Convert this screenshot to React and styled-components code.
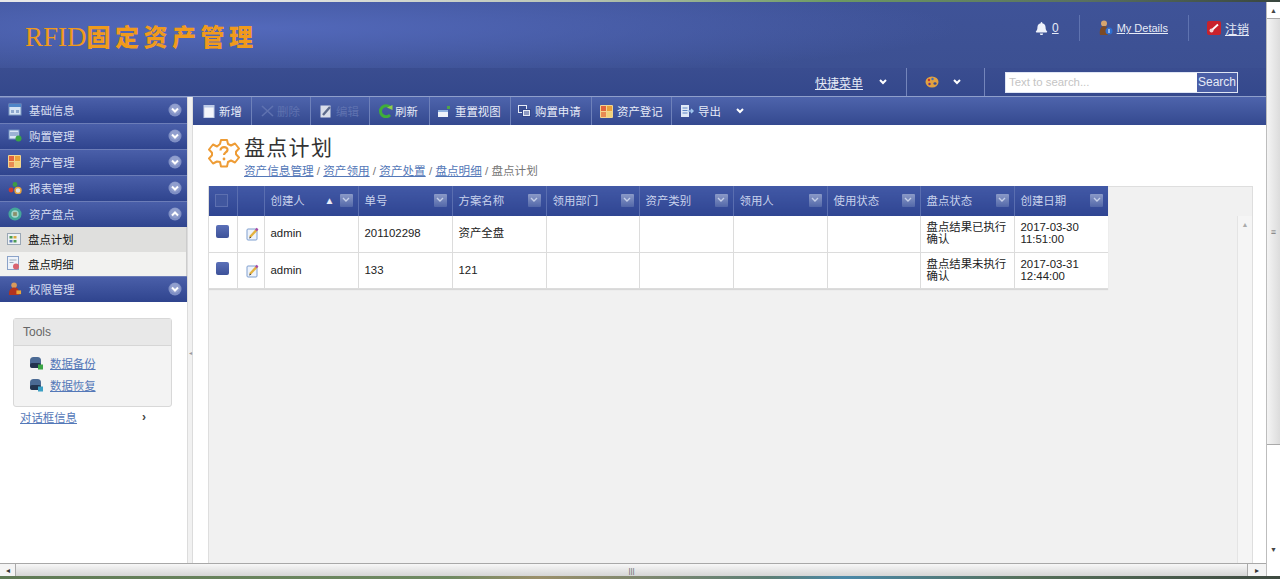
import React from 'react';
import styled, { createGlobalStyle } from 'styled-components';
import { FaBell } from 'react-icons/fa';

const GlobalStyle = createGlobalStyle`
  html, body {
    margin: 0;
    padding: 0;
    height: 579px;
    overflow: hidden;
    background: #fff;
    font-family: "Liberation Sans", "Noto Sans CJK SC", sans-serif;
    font-size: 11.4px;
  }
  * { box-sizing: border-box; }
`;

const Shell = styled.div`
  width: 1280px;
  height: 579px;
  display: flex;
  flex-direction: column;
`;
const TopStrip = styled.div`
  height: 2px;
  flex: none;
  background: linear-gradient(90deg, #e8e8e8 0, #e8e8e8 18%, #b9c4b4 45%, #6d9a62 65%, #59705f 85%, #39463f 100%);
`;
const Window = styled.div`
  flex: 1;
  min-height: 0;
  display: flex;
`;
const Page = styled.div`
  flex: 1;
  min-width: 0;
  display: flex;
  flex-direction: column;
`;

/* header */
const Header = styled.header`
  height: 66px;
  flex: none;
  display: flex;
  align-items: flex-start;
  justify-content: space-between;
  padding: 19px 17px 0 25px;
  background:
    radial-gradient(ellipse 720px 52px at 240px 26px, #5369bb 0, rgba(83, 105, 187, 0) 100%),
    linear-gradient(#3f5398, #3c5092);
`;
const Logo = styled.div`
  font-family: "Liberation Serif", "Noto Sans CJK SC", serif;
  font-size: 27px;
  line-height: 30px;
  font-weight: 400;
  color: #f09a1c;
  white-space: nowrap;
  & > b {
    font-family: "Noto Sans CJK SC", sans-serif;
    font-weight: 900;
    font-size: 24px;
    letter-spacing: 4.5px;
  }
`;
const HeaderTools = styled.div`
  display: flex;
  align-items: center;
  height: 26px;
  margin-top: -6px;
`;
const HeadTool = styled.div`
  display: flex;
  align-items: center;
  gap: 4px;
  height: 26px;
  padding-left: ${(p) => p.$pl || 0}px;
  padding-right: ${(p) => p.$pr || 0}px;
  border-left: ${(p) => (p.$sep ? '1px solid #5f73b0' : 'none')};
  svg { flex: none; }
`;
const WhiteLink = styled.a`
  color: #e6ebf7;
  font-size: ${(p) => p.$size || 12}px;
  text-decoration: underline;
`;

const SubBar = styled.div`
  height: 29px;
  flex: none;
  display: flex;
  align-items: center;
  justify-content: flex-end;
  padding-right: 28px;
  background: linear-gradient(#3a4d90, #34488c);
  border-bottom: 1px solid #8f9fcb;
`;
const SubItem = styled.div`
  height: 28px;
  display: flex;
  align-items: center;
  padding-left: ${(p) => p.$pl || 0}px;
  padding-right: ${(p) => p.$pr || 0}px;
  gap: ${(p) => p.$gap || 0}px;
  border-left: ${(p) => (p.$sep ? '1px solid #7485bb' : 'none')};
`;
const SearchBox = styled.div`
  width: 233px;
  height: 21px;
  display: flex;
  background: #fff;
  border: 1px solid #dfe5f4;
`;
const SearchInput = styled.div`
  flex: 1;
  padding-left: 3px;
  line-height: 19px;
  color: #c4c4c4;
`;
const SearchButton = styled.div`
  width: 40px;
  background: #4a5ea6;
  color: #e6ebf7;
  text-align: center;
  line-height: 19px;
  font-size: 12px;
`;

/* body */
const Body = styled.div`
  flex: 1;
  min-height: 0;
  display: flex;
`;
const Sidebar = styled.aside`
  width: 187px;
  flex: none;
  background: #fff;
`;
const NavHead = styled.div`
  height: 26px;
  display: flex;
  align-items: center;
  padding: 0 5px 2px 8px;
  background: linear-gradient(#4a5fa9, #2f448e);
  border-top: 1px solid #6c7db8;
  color: #d5dcf0;
  & > span { flex: 1; margin-left: 7px; }
  & > svg { flex: none; }
`;
const NavSub = styled.div`
  height: 24.5px;
  display: flex;
  align-items: center;
  gap: 7px;
  padding-left: 7px;
  color: #111;
  background: ${(p) => (p.$active ? '#dfdfdd' : '#f2f2f0')};
  border-right: 1px solid #ccc;
`;
const ToolsBox = styled.div`
  margin: 16px 15px 0 13px;
  height: 89px;
  background: #f3f3f3;
  border: 1px solid #d8d8d8;
  border-radius: 3px;
`;
const ToolsTitle = styled.div`
  height: 27px;
  line-height: 26px;
  padding-left: 9px;
  color: #666;
  font-size: 12px;
  background: #e8e8e8;
  border-bottom: 1px solid #d6d6d6;
`;
const ToolsList = styled.div`
  padding: 6px 0 0 15px;
`;
const ToolsLink = styled.div`
  height: 22px;
  display: flex;
  align-items: center;
  gap: 6px;
`;
const BlueLink = styled.a`
  color: #5478b8;
  text-decoration: underline;
`;
const DialogRow = styled.div`
  display: flex;
  justify-content: space-between;
  align-items: center;
  padding: 2px 41px 0 20px;
  color: #444;
  & > b { font-size: 12px; }
`;
const Splitter = styled.div`
  width: 6px;
  flex: none;
  display: flex;
  align-items: center;
  justify-content: center;
  padding-top: 44px;
  background: #f1f1f1;
  border-left: 1px solid #dcdcdc;
  border-right: 1px solid #dcdcdc;
  color: #999;
  font-size: 6px;
`;

/* main */
const Main = styled.main`
  flex: 1;
  min-width: 0;
  display: flex;
  flex-direction: column;
`;
const Toolbar = styled.div`
  height: 28px;
  flex: none;
  display: flex;
  background: linear-gradient(#4e64ac, #34498f);
`;
const ToolButton = styled.div`
  width: ${(p) => p.$w}px;
  flex: none;
  display: flex;
  align-items: center;
  gap: ${(p) => p.$gap ?? 4}px;
  padding-left: ${(p) => p.$pl ?? 9}px;
  color: ${(p) => (p.$disabled ? '#5f72b0' : '#e8ecf8')};
  border-right: ${(p) => (p.$last ? 'none' : '1px solid #6e81ba')};
  & > span { white-space: nowrap; }
`;
const ToolCaret = styled.div`
  margin-left: 11px;
  display: flex;
`;
const Content = styled.div`
  flex: 1;
  min-height: 0;
  display: flex;
  flex-direction: column;
  padding: 10px 13px 0 15px;
  background: #fff;
`;
const TitleRow = styled.div`
  height: 51px;
  flex: none;
  display: flex;
  gap: 4px;
`;
const TitleIcon = styled.div`
  padding-top: 3px;
`;
const PageTitle = styled.h1`
  margin: 0;
  font-size: 21px;
  line-height: 25px;
  font-weight: 400;
  letter-spacing: 1.3px;
  color: #333;
`;
const Crumbs = styled.div`
  font-size: 11.6px;
  line-height: 14px;
  margin-top: 4px;
  color: #777;
`;
const Panel = styled.div`
  flex: 1;
  min-height: 0;
  display: flex;
  background: #f1f1f1;
  border: 1px solid #dedede;
  border-top: none;
  border-bottom: none;
  box-shadow: inset 0 1px 0 #dedede;
`;
const TableArea = styled.div`
  flex: 1;
  min-width: 0;
`;
const InnerScroll = styled.div`
  width: 15px;
  flex: none;
  margin-top: 30px;
  padding-top: 5px;
  display: flex;
  justify-content: center;
  background: #f5f5f5;
  border-left: 1px solid #e4e4e4;
  color: #aaa;
  font-size: 7px;
`;
const Grid = styled.table`
  width: 899px;
  table-layout: fixed;
  border-collapse: collapse;
  background: #fff;
  font-size: 11.4px;
  box-shadow: 0 1px 1px #d8d8d8;
`;
const HeadCell = styled.th`
  height: 30px;
  padding: 0 5px 2px 6px;
  font-weight: 400;
  text-align: left;
  color: #c9d2ec;
  background: linear-gradient(#4259a6, #2f4592);
  border-right: 1px solid #5a6eb0;
  &:last-child { border-right: none; }
`;
const HeadInner = styled.div`
  display: flex;
  align-items: center;
  justify-content: space-between;
`;
const SortGroup = styled.div`
  display: flex;
  align-items: center;
  gap: 5px;
  color: #e8ecf8;
  font-size: 10px;
`;
const FilterIcon = styled.div`
  width: 13px;
  height: 13px;
  flex: none;
  background: linear-gradient(#8b9ac8, #5267a8);
  border-radius: 1px;
  display: flex;
  align-items: center;
  justify-content: center;
`;
const HeadBox = styled.div`
  width: 13px;
  height: 13px;
  border: 1px solid #5d70b0;
  background: #41579f;
`;
const Cell = styled.td`
  height: ${(p) => p.$h}px;
  padding: 0 5px 1px 6px;
  color: #222;
  line-height: 12px;
  border-right: 1px solid #dcdcdc;
  border-bottom: 1px solid #dcdcdc;
  &:last-child { border-right: none; }
`;
const RowCheck = styled.div`
  width: 13px;
  height: 13px;
  margin: -3px 0 0 1px;
  background: linear-gradient(#5b70b8, #3d5299);
  border-radius: 2px;
`;
const EditWrap = styled.div`
  padding-top: 4px;
  margin-left: 2px;
`;

/* scrollbars */
const HScroll = styled.div`
  height: 13px;
  flex: none;
  display: flex;
  border-top: 1px solid #a8a8a8;
  background: #fff;
`;
const HArrow = styled.div`
  width: ${(p) => p.$w}px;
  flex: none;
  display: flex;
  align-items: center;
  justify-content: center;
  color: #333;
  font-size: 8px;
  background: #f4f4f4;
`;
const HThumb = styled.div`
  flex: 1;
  display: flex;
  align-items: center;
  justify-content: center;
  color: #666;
  font-size: 8px;
  background: linear-gradient(#f7f7f7, #d5d5d5);
  border-left: 1px solid #aaa;
  border-right: 1px solid #aaa;
`;
const VScroll = styled.div`
  width: 14px;
  flex: none;
  display: flex;
  flex-direction: column;
  background: #fff;
  border-left: 1px solid #bdbdbd;
`;
const VArrow = styled.div`
  height: ${(p) => p.$h}px;
  flex: none;
  display: flex;
  align-items: ${(p) => p.$align || 'center'};
  justify-content: center;
  color: #444;
  font-size: 7px;
`;
const VThumb = styled.div`
  height: 427px;
  flex: none;
  display: flex;
  align-items: center;
  justify-content: center;
  color: #777;
  font-size: 9px;
  background: linear-gradient(90deg, #f4f4f4, #dcdcdc);
  border-top: 1px solid #aaa;
  border-bottom: 1px solid #aaa;
`;
const VGap = styled.div`
  flex: 1;
`;
const BottomStrip = styled.div`
  height: 3px;
  flex: none;
  background: linear-gradient(90deg, #5f7a55 0, #6f8a62 35%, #9a8f6a 42%, #5d7f75 60%, #4a88a8 66%, #55705a 80%, #3e4a40 100%);
`;

/* icons */
const Chevron = ({ up }) => (
  <svg width="14" height="14" viewBox="0 0 14 14">
    <circle cx="7" cy="7" r="6.5" fill="#7f8fc4" />
    <circle cx="7" cy="6" r="5" fill="#a4b0d8" opacity="0.5" />
    <path d={up ? 'M4 8.5 7 5.5l3 3' : 'M4 5.5 7 8.5l3-3'} fill="none" stroke="#fff" strokeWidth="2" />
  </svg>
);
const SmallDown = () => (
  <svg width="8" height="6" viewBox="0 0 8 6">
    <path d="M1 1 4 4l3-3" fill="none" stroke="#fff" strokeWidth="2" />
  </svg>
);
const Win = () => (
  <svg width="14" height="13" viewBox="0 0 14 13">
    <rect x="1" y="1" width="12" height="11" fill="#d5e4f4" stroke="#7f9cc4" />
    <rect x="1" y="1" width="12" height="3" fill="#4f86c8" />
    <rect x="3" y="7" width="3" height="3" fill="#8ea9cf" />
    <rect x="8" y="7" width="3" height="3" fill="#8ea9cf" />
  </svg>
);
const CartIcon = () => (
  <svg width="14" height="13" viewBox="0 0 14 13">
    <rect x="1" y="1" width="10" height="9" fill="#dbe7f5" stroke="#6f8fc0" />
    <path d="M2 4h8M2 6h8" stroke="#5f7fb5" />
    <circle cx="10.5" cy="9.5" r="3" fill="#3aa544" />
  </svg>
);
const AssetIcon = () => (
  <svg width="14" height="13" viewBox="0 0 14 13">
    <rect width="13" height="13" rx="1" fill="#f3d58e" />
    <rect x="1" y="1" width="5" height="5" fill="#e2643e" />
    <rect x="7" y="1" width="5" height="5" fill="#eaa13a" />
    <rect x="1" y="7" width="5" height="5" fill="#e88b52" />
    <rect x="7" y="7" width="5" height="5" fill="#f0d37a" />
  </svg>
);
const ReportIcon = () => (
  <svg width="14" height="13" viewBox="0 0 14 13">
    <circle cx="3" cy="9" r="2.4" fill="#cc3b30" />
    <circle cx="7" cy="3.5" r="2.4" fill="#3d9a45" />
    <circle cx="10" cy="9.5" r="3" fill="#e3e3e3" stroke="#e7a33b" strokeWidth="1.5" />
  </svg>
);
const DiscIcon = () => (
  <svg width="14" height="14" viewBox="0 0 15 15">
    <circle cx="7.5" cy="7.5" r="7" fill="#45a69a" />
    <circle cx="7.5" cy="7.5" r="4" fill="#a3d5ca" />
    <rect x="5.5" y="5.5" width="4" height="4" fill="#8a8f6a" />
  </svg>
);
const PermIcon = () => (
  <svg width="14" height="14" viewBox="0 0 15 15">
    <circle cx="6.5" cy="3.5" r="3" fill="#d99a5b" />
    <path d="M1 14c0-6 2-8 6-8s5 3 5 8z" fill="#b3331f" />
    <path d="M9 9h5v4H9z" fill="#e8a53a" />
  </svg>
);
const PlanIcon = () => (
  <svg width="14" height="12" viewBox="0 0 14 12">
    <rect x="0.5" y="0.5" width="13" height="11" fill="#eef2f5" stroke="#9aa7b5" />
    <rect x="2.5" y="3" width="3" height="2.5" fill="#4c9c54" />
    <rect x="6.5" y="3" width="3" height="2.5" fill="#d9a93e" />
    <rect x="2.5" y="7" width="3" height="2.5" fill="#5678b8" />
    <rect x="6.5" y="7" width="3" height="2.5" fill="#4c9c54" />
  </svg>
);
const DetailIcon = () => (
  <svg width="14" height="15" viewBox="0 0 14 15">
    <rect x="0.5" y="0.5" width="11" height="13" fill="#eef3fa" stroke="#8ba3c9" />
    <path d="M2.5 4h7M2.5 6.5h4" stroke="#9ab" />
    <circle cx="9" cy="10.5" r="3" fill="#d9636f" />
  </svg>
);
const DbIcon = ({ badge }) => (
  <svg width="15" height="14" viewBox="0 0 15 14">
    <rect x="1" y="1" width="11" height="11" rx="3.5" fill="#4b6a94" />
    <rect x="1" y="7" width="11" height="5" rx="2" fill="#23344f" />
    <rect x="9" y="8.5" width="5" height="5" fill={badge} />
  </svg>
);
const NewIcon = () => (
  <svg width="12" height="13" viewBox="0 0 12 13">
    <rect x="1" y="0.5" width="10" height="12" fill="#f4f6fb" stroke="#c5d0e8" />
    <path d="M1 0.5h10v2H1z" fill="#b9c8e6" />
  </svg>
);
const CrossIcon = () => (
  <svg width="13" height="12" viewBox="0 0 13 12">
    <path d="M1 1l11 10M12 1 1 11" stroke="#5f72b0" strokeWidth="1.6" />
  </svg>
);
const PencilPage = () => (
  <svg width="12" height="13" viewBox="0 0 12 13">
    <rect x="0.5" y="0.5" width="10" height="12" fill="#d9deea" />
    <path d="M3 10 10 2" stroke="#5d6b8c" strokeWidth="2.4" />
  </svg>
);
const RefreshIcon = () => (
  <svg width="16" height="14" viewBox="0 0 16 14">
    <path d="M13 3.5A5.5 5.5 0 1 0 13 11" fill="none" stroke="#3fae3a" strokeWidth="3" />
    <path d="M10 3.5 15.5 1v5z" fill="#8ed04a" />
  </svg>
);
const ResetIcon = () => (
  <svg width="14" height="13" viewBox="0 0 14 13">
    <rect x="1" y="5" width="10" height="7" fill="#eef2fa" />
    <rect x="1" y="5" width="10" height="2" fill="#8fb1e0" />
    <path d="M10 1h3v3h-3z" fill="#4ea34a" />
  </svg>
);
const BuyIcon = () => (
  <svg width="13" height="12" viewBox="0 0 13 12">
    <rect x="0.5" y="0.5" width="8" height="7" fill="#3b4f92" stroke="#e6ebf7" />
    <rect x="4.5" y="4.5" width="8" height="7" fill="#e6ebf7" stroke="#33478b" />
    <path d="M6 7h5M6 9h5" stroke="#33478b" />
  </svg>
);
const ExportIcon = () => (
  <svg width="14" height="14" viewBox="0 0 14 14">
    <rect x="1" y="1" width="8" height="12" fill="#dfe9f7" />
    <path d="M2.5 4h5M2.5 6.5h5M2.5 9h5" stroke="#5f86c4" />
    <path d="M8 7h5M11 5l2 2-2 2" stroke="#9fc5ee" strokeWidth="1.5" fill="none" />
  </svg>
);
const UserIcon = () => (
  <svg width="15" height="16" viewBox="0 0 15 16">
    <circle cx="6" cy="3.5" r="3" fill="#d6a56f" />
    <path d="M2 15c-1-5 1-9 4-9s4 3 4 9z" fill="#7b4a26" />
    <circle cx="11" cy="11" r="3.5" fill="#2f6fd0" />
    <rect x="10.5" y="9" width="1" height="4" fill="#fff" />
  </svg>
);
const KeyIcon = () => (
  <svg width="14" height="14" viewBox="0 0 14 14">
    <rect width="14" height="14" rx="2" fill="#c8222c" />
    <circle cx="4.5" cy="9.5" r="2" fill="#f5d4d4" />
    <path d="M5.5 8.5 11 3.5" stroke="#fff" strokeWidth="1.8" />
  </svg>
);
const PaletteIcon = () => (
  <svg width="14" height="12" viewBox="0 0 14 12">
    <ellipse cx="7" cy="6" rx="6.5" ry="5.5" fill="#e2a13f" />
    <circle cx="4" cy="4" r="1.2" fill="#c4342b" />
    <circle cx="7.5" cy="3" r="1.2" fill="#3b6fc4" />
    <circle cx="4.5" cy="8" r="1.2" fill="#6a2f86" />
    <ellipse cx="10" cy="7.5" rx="1.6" ry="1.2" fill="#3a4d90" />
  </svg>
);
const GearIcon = () => (
  <svg width="32" height="32" viewBox="0 0 32 32">
    <path
      d="M13 2h6l1 4 3 1.5 4-2 4 5-3 3.2v2.6l3 3.2-4 5-4-2-3 1.5-1 4.5h-6l-1-4.5L9 23.5l-4 2-4-5 3-3.2v-2.6l-3-3.2 4-5 4 2L12 6z"
      fill="#fff"
      stroke="#ee9c35"
      strokeWidth="2"
      strokeLinejoin="round"
    />
    <path d="M12.5 12.5c0-5 7.5-4 7-.5-.3 2.5-3.5 2.5-3.5 5" fill="none" stroke="#ee9c35" strokeWidth="2.2" />
    <circle cx="16" cy="21" r="1.4" fill="#ee9c35" />
  </svg>
);
const EditIcon = () => (
  <svg width="14" height="14" viewBox="0 0 14 14">
    <rect x="1" y="2" width="10" height="11" rx="1" fill="#eef3fb" stroke="#7f9fcf" />
    <path d="M4 10 11 2.5" stroke="#e4b23f" strokeWidth="2.4" />
    <path d="M10 3.5 11.5 1.5" stroke="#a54aa8" strokeWidth="2.4" />
    <path d="M3 11.5 4 9.5 5.2 10.7z" fill="#333" />
  </svg>
);
const FilterGlyph = () => (
  <svg width="8" height="6" viewBox="0 0 8 6">
    <path d="M1 1 4 4l3-3" fill="none" stroke="#c5cfe8" strokeWidth="1.4" />
  </svg>
);

const navTop = [
  { label: '基础信息', icon: <Win /> },
  { label: '购置管理', icon: <CartIcon /> },
  { label: '资产管理', icon: <AssetIcon /> },
  { label: '报表管理', icon: <ReportIcon /> },
];
const toolItems = [
  { label: '新增', icon: <NewIcon />, w: 59, pl: 10 },
  { label: '删除', icon: <CrossIcon />, w: 59, pl: 9, gap: 3, disabled: true },
  { label: '编辑', icon: <PencilPage />, w: 59, pl: 9, disabled: true },
  { label: '刷新', icon: <RefreshIcon />, w: 60, pl: 7, gap: 2 },
  { label: '重置视图', icon: <ResetIcon />, w: 81, pl: 7 },
  { label: '购置申请', icon: <BuyIcon />, w: 81, pl: 7 },
  { label: '资产登记', icon: <AssetIcon />, w: 80, pl: 8, gap: 3 },
];
const columns = [
  { w: 28, box: true },
  { w: 27 },
  { w: 94, label: '创建人', sort: true },
  { w: 94, label: '单号' },
  { w: 94, label: '方案名称' },
  { w: 93, label: '领用部门' },
  { w: 94, label: '资产类别' },
  { w: 94, label: '领用人' },
  { w: 93, label: '使用状态' },
  { w: 94, label: '盘点状态' },
  { w: 94, label: '创建日期' },
];
const rows = [
  { h: 36, by: 'admin', no: '201102298', plan: '资产全盘', state: '盘点结果已执行确认', date: ['2017-03-30', '11:51:00'] },
  { h: 36, by: 'admin', no: '133', plan: '121', state: '盘点结果未执行确认', date: ['2017-03-31', '12:44:00'] },
];

export default function App() {
  return (
    <Shell>
      <GlobalStyle />
      <TopStrip />
      <Window>
        <Page>
          <Header>
            <Logo>RFID<b>固定资产管理</b></Logo>
            <HeaderTools>
              <HeadTool $pr={20}>
                <FaBell size={13} color="#eef1fa" />
                <WhiteLink>0</WhiteLink>
              </HeadTool>
              <HeadTool $sep $pl={18} $pr={20}>
                <UserIcon />
                <WhiteLink $size={11}>My Details</WhiteLink>
              </HeadTool>
              <HeadTool $sep $pl={18}>
                <KeyIcon />
                <WhiteLink>注销</WhiteLink>
              </HeadTool>
            </HeaderTools>
          </Header>
          <SubBar>
            <SubItem $pr={19} $gap={16}>
              <WhiteLink>快捷菜单</WhiteLink>
              <SmallDown />
            </SubItem>
            <SubItem $sep $pl={18} $pr={23} $gap={14}>
              <PaletteIcon />
              <SmallDown />
            </SubItem>
            <SubItem $sep $pl={20}>
              <SearchBox>
                <SearchInput>Text to search...</SearchInput>
                <SearchButton>Search</SearchButton>
              </SearchBox>
            </SubItem>
          </SubBar>
          <Body>
            <Sidebar>
              {navTop.map((n) => (
                <NavHead key={n.label}>
                  {n.icon}
                  <span>{n.label}</span>
                  <Chevron />
                </NavHead>
              ))}
              <NavHead>
                <DiscIcon />
                <span>资产盘点</span>
                <Chevron up />
              </NavHead>
              <NavSub $active>
                <PlanIcon />
                盘点计划
              </NavSub>
              <NavSub>
                <DetailIcon />
                盘点明细
              </NavSub>
              <NavHead>
                <PermIcon />
                <span>权限管理</span>
                <Chevron />
              </NavHead>
              <ToolsBox>
                <ToolsTitle>Tools</ToolsTitle>
                <ToolsList>
                  <ToolsLink>
                    <DbIcon badge="#3aa544" />
                    <BlueLink>数据备份</BlueLink>
                  </ToolsLink>
                  <ToolsLink>
                    <DbIcon badge="#3a9fc4" />
                    <BlueLink>数据恢复</BlueLink>
                  </ToolsLink>
                </ToolsList>
              </ToolsBox>
              <DialogRow>
                <BlueLink>对话框信息</BlueLink>
                <b>›</b>
              </DialogRow>
            </Sidebar>
            <Splitter>◂</Splitter>
            <Main>
              <Toolbar>
                {toolItems.map((t) => (
                  <ToolButton key={t.label} $w={t.w} $pl={t.pl} $disabled={t.disabled} $gap={t.gap}>
                    {t.icon}
                    <span>{t.label}</span>
                  </ToolButton>
                ))}
                <ToolButton $last $w={80} $pl={8}>
                  <ExportIcon />
                  <span>导出</span>
                  <ToolCaret><SmallDown /></ToolCaret>
                </ToolButton>
              </Toolbar>
              <Content>
                <TitleRow>
                  <TitleIcon><GearIcon /></TitleIcon>
                  <div>
                    <PageTitle>盘点计划</PageTitle>
                    <Crumbs>
                      <BlueLink>资产信息管理</BlueLink> / <BlueLink>资产领用</BlueLink> / <BlueLink>资产处置</BlueLink> / <BlueLink>盘点明细</BlueLink> / 盘点计划
                    </Crumbs>
                  </div>
                </TitleRow>
                <Panel>
                  <TableArea>
                    <Grid>
                      <colgroup>
                        {columns.map((c, i) => <col key={i} width={c.w} />)}
                      </colgroup>
                      <thead>
                        <tr>
                          {columns.map((c, i) => (
                            <HeadCell key={i}>
                              {c.box && <HeadBox />}
                              {c.label && (
                                <HeadInner>
                                  {c.label}
                                  <SortGroup>
                                    {c.sort && '▲'}
                                    <FilterIcon><FilterGlyph /></FilterIcon>
                                  </SortGroup>
                                </HeadInner>
                              )}
                            </HeadCell>
                          ))}
                        </tr>
                      </thead>
                      <tbody>
                        {rows.map((r) => (
                          <tr key={r.no}>
                            <Cell $h={r.h}><RowCheck /></Cell>
                            <Cell $h={r.h}><EditWrap><EditIcon /></EditWrap></Cell>
                            <Cell $h={r.h}>{r.by}</Cell>
                            <Cell $h={r.h}>{r.no}</Cell>
                            <Cell $h={r.h}>{r.plan}</Cell>
                            <Cell $h={r.h} />
                            <Cell $h={r.h} />
                            <Cell $h={r.h} />
                            <Cell $h={r.h} />
                            <Cell $h={r.h}>{r.state}</Cell>
                            <Cell $h={r.h}>{r.date[0]}<br />{r.date[1]}</Cell>
                          </tr>
                        ))}
                      </tbody>
                    </Grid>
                  </TableArea>
                  <InnerScroll>▲</InnerScroll>
                </Panel>
              </Content>
            </Main>
          </Body>
          <HScroll>
            <HArrow $w={15}>◂</HArrow>
            <HThumb>|||</HThumb>
            <HArrow $w={18}>▸</HArrow>
          </HScroll>
        </Page>
        <VScroll>
          <VArrow $h={16}>▲</VArrow>
          <VThumb>≡</VThumb>
          <VGap />
          <VArrow $h={30} $align="flex-start">▼</VArrow>
        </VScroll>
      </Window>
      <BottomStrip />
    </Shell>
  );
}
